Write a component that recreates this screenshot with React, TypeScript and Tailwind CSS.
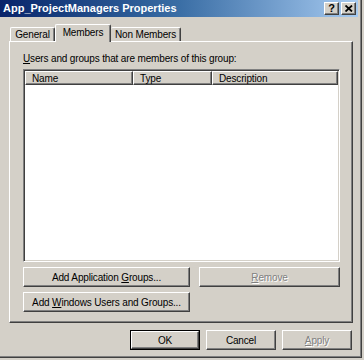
import React from 'react'

const raised =
  'border-t border-l border-r border-b border-t-white border-l-white border-r-[#404040] border-b-[#404040] shadow-[inset_-1px_-1px_0_#808080]'

function Btn({ children, className = '', disabled = false, def = false }: { children: React.ReactNode; className?: string; disabled?: boolean; def?: boolean }) {
  if (def) {
    return (
      <div className={`border border-black ${className}`}>
        <div className={`h-full w-full flex items-center justify-center bg-[#d4d0c8] ${raised}`}>
          <span className="text-black whitespace-nowrap">{children}</span>
        </div>
      </div>
    )
  }
  return (
    <div className={`flex items-center justify-center bg-[#d4d0c8] ${raised} ${className}`}>
      <span className={`whitespace-nowrap ${disabled ? 'text-[#808080] [text-shadow:1px_1px_0_#fff]' : 'text-black'}`}>{children}</span>
    </div>
  )
}

export default function App() {
  const cols = [
    { label: 'Name', w: 'w-[108px]' },
    { label: 'Type', w: 'w-[79px]' },
    { label: 'Description', w: 'w-[126px]' },
  ]

  return (
    <div
      className="w-[364px] h-[360px] bg-[#d4d0c8] text-[10px] leading-[13px] tracking-[-0.15px] text-black overflow-hidden"
      style={{ fontFamily: '"Liberation Sans", Arial, sans-serif' }}
    >
      <div className="w-[362px] h-[358px] flex flex-col border-r border-b border-r-[#404040] border-b-[#404040] shadow-[inset_-1px_-1px_0_#808080] pr-[3px] pb-[3px]">
        {/* Title bar */}
        <div className="h-[17px] flex items-center justify-between pl-[3px] pr-[2px] bg-gradient-to-r from-[#0a246a] via-[#3a6ea5] to-[#a6caf0]">
          <span className="font-bold text-white text-[11px] tracking-normal whitespace-nowrap">App_ProjectManagers Properties</span>
          <div className="flex gap-[2px]">
            <div className={`w-[15px] h-[13px] flex items-center justify-center bg-[#d4d0c8] ${raised}`}>
              <span className="font-bold text-[11px] leading-none text-black">?</span>
            </div>
            <div className={`w-[15px] h-[13px] flex items-center justify-center bg-[#d4d0c8] ${raised}`}>
              <svg width="8" height="7" viewBox="0 0 8 7">
                <path d="M0.5 0.5 L7 6.5 M7 0.5 L0.5 6.5" stroke="#000" strokeWidth="1.8" />
              </svg>
            </div>
          </div>
        </div>

        {/* Tabs */}
        <div className="mt-[7px] h-[17px] flex items-end pl-[10px] whitespace-nowrap">
          <div className="w-[45px] h-[14px] flex items-center justify-center border-t border-l border-r border-t-white border-l-white border-r-[#404040] shadow-[inset_-1px_0_0_#808080] rounded-t-[2px]">
            General
          </div>
          <div className="relative z-10 w-[56px] h-[18px] -mb-[1px] bg-[#d4d0c8] flex items-center justify-center pb-[2px] border-t border-l border-r border-t-white border-l-white border-r-[#404040] shadow-[inset_-1px_0_0_#808080] rounded-t-[2px]">
            Members
          </div>
          <div className="w-[70px] h-[14px] flex items-center justify-center border-t border-r border-t-white border-r-[#404040] shadow-[inset_-1px_0_0_#808080] rounded-t-[2px]">
            Non Members
          </div>
        </div>

        {/* Panel */}
        <div className={`ml-[9px] w-[344px] h-[282px] flex flex-col pl-[13px] pt-[10px] ${raised}`}>
          <div className="h-[13px] whitespace-nowrap">
            <span className="underline underline-offset-[1px]">U</span>sers and groups that are members of this group:
          </div>
          <div className="mt-[4px] w-[317px] h-[193px] bg-white border-t border-l border-r border-b border-t-[#808080] border-l-[#808080] border-r-white border-b-white shadow-[inset_1px_1px_0_#404040,inset_-1px_-1px_0_#d4d0c8] p-[1px]">
            <div className="flex h-[14px]">
              {cols.map((c) => (
                <div key={c.label} className={`${c.w} h-full flex items-center pl-[6px] bg-[#d4d0c8] ${raised}`}>
                  {c.label}
                </div>
              ))}
            </div>
          </div>
          <div className="mt-[5px] flex gap-[9px]">
            <Btn className="w-[167px] h-[20px]">
              Add Application <span className="underline underline-offset-[1px]">G</span>roups...
            </Btn>
            <Btn className="w-[141px] h-[20px]" disabled>
              <span className="underline underline-offset-[1px]">R</span>emove
            </Btn>
          </div>
          <div className="mt-[5px] flex">
            <Btn className="w-[167px] h-[20px]">
              Add <span className="underline underline-offset-[1px]">W</span>indows Users and Groups...
            </Btn>
          </div>
        </div>

        {/* Dialog buttons */}
        <div className="mt-[7px] flex justify-end gap-[6px] pr-[6px]">
          <Btn className="w-[70px] h-[20px]" def>
            OK
          </Btn>
          <Btn className="w-[70px] h-[20px]">Cancel</Btn>
          <Btn className="w-[70px] h-[20px]" disabled>
            <span className="underline underline-offset-[1px]">A</span>pply
          </Btn>
        </div>
      </div>
    </div>
  )
}
